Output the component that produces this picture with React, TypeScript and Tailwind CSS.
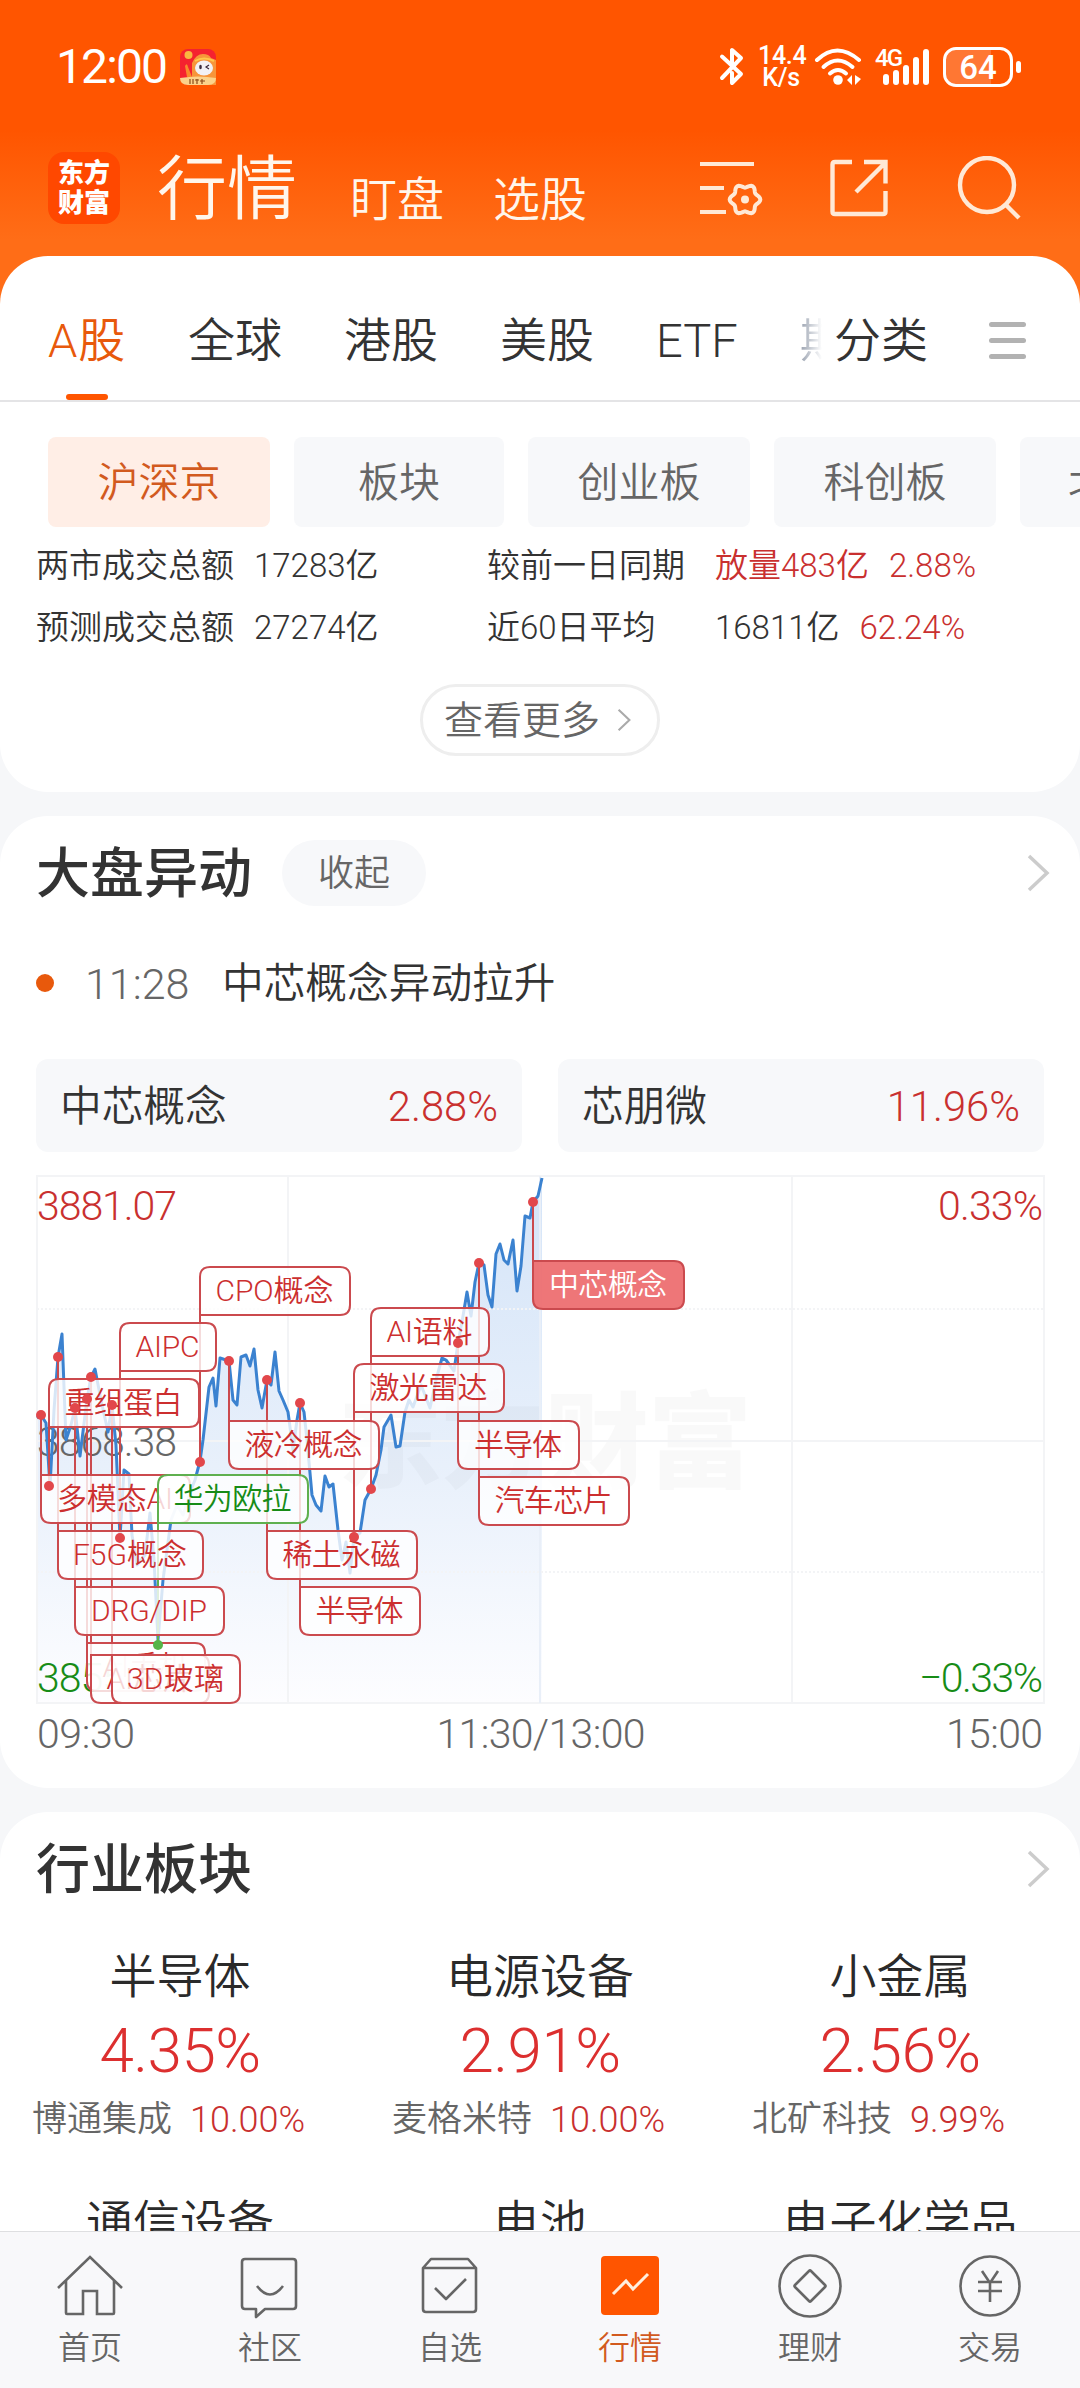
const tabs = ["A股", "全球", "港股", "美股", "ETF"]

const nodes: [number, number][] = [
  [37, 1418], [41, 1415], [46, 1423], [50, 1487], [54, 1410], [58, 1357], [62, 1334], [66, 1440],
  [71, 1425], [75, 1408], [80, 1456], [87, 1399], [91, 1377], [95, 1369], [101, 1400], [108, 1432],
  [112, 1405], [116, 1445], [120, 1538], [124, 1470], [129, 1474], [132, 1535], [137, 1565],
  [145, 1555], [150, 1513], [154, 1560], [158, 1640], [163, 1580], [171, 1520], [177, 1505],
  [183, 1515], [191, 1490], [195, 1480], [200, 1461], [203, 1440], [209, 1387], [213, 1378],
  [216, 1406], [220, 1358], [229, 1361], [233, 1400], [237, 1405], [241, 1357], [246, 1355],
  [250, 1366], [254, 1349], [258, 1390], [262, 1408], [267, 1380], [271, 1385], [275, 1352],
  [279, 1391], [283, 1400], [288, 1412], [293, 1450], [297, 1420], [300, 1403], [304, 1412],
  [307, 1440], [312, 1495], [316, 1505], [321, 1511], [325, 1476], [329, 1487], [333, 1484],
  [338, 1530], [342, 1560], [346, 1542], [350, 1573], [354, 1537], [360, 1533], [365, 1500],
  [371, 1489], [376, 1475], [381, 1450], [384, 1427], [391, 1415], [396, 1447], [400, 1446],
  [405, 1412], [409, 1400], [413, 1407], [421, 1385], [425, 1395], [430, 1408], [436, 1380],
  [442, 1358], [446, 1360], [454, 1371], [458, 1343], [463, 1316], [467, 1292], [471, 1316],
  [475, 1282], [479, 1263], [484, 1265], [488, 1295], [492, 1307], [496, 1254], [500, 1244],
  [504, 1260], [508, 1264], [513, 1240], [517, 1291], [521, 1266], [525, 1216], [530, 1218],
  [533, 1202], [538, 1196], [542, 1178],
]

type Flag = {
  text: string
  x: number
  y: number
  w: number
  dot: number
  textW: number
  kind?: "green" | "solid"
}

const flags: Flag[] = [
  { text: "CPO概念", x: 200, y: 1267, w: 150, dot: 1462, textW: 118 },
  { text: "AIPC", x: 120, y: 1323, w: 96, dot: 1538, textW: 64 },
  { text: "重组蛋白", x: 49, y: 1379, w: 150, dot: 1486, textW: 118 },
  { text: "多模态AI", x: 41, y: 1475, w: 149, dot: 1415, textW: 116 },
  { text: "华为欧拉", x: 158, y: 1475, w: 150, dot: 1645, textW: 118, kind: "green" },
  { text: "F5G概念", x: 58, y: 1531, w: 145, dot: 1357, textW: 114 },
  { text: "DRG/DIP", x: 75, y: 1587, w: 149, dot: 1408, textW: 116 },
  { text: "AI手机", x: 87, y: 1643, w: 118, dot: 1399, textW: 86 },
  { text: "AI芯片", x: 91, y: 1655, w: 118, dot: 1377, textW: 86 },
  { text: "3D玻璃", x: 112, y: 1655, w: 128, dot: 1405, textW: 97 },
  { text: "稀土永磁", x: 267, y: 1531, w: 150, dot: 1380, textW: 118 },
  { text: "半导体", x: 300, y: 1587, w: 120, dot: 1403, textW: 88 },
  { text: "AI语料", x: 371, y: 1308, w: 118, dot: 1489, textW: 86 },
  { text: "激光雷达", x: 354, y: 1364, w: 150, dot: 1537, textW: 118 },
  { text: "液冷概念", x: 229, y: 1421, w: 150, dot: 1361, textW: 118 },
  { text: "半导体", x: 458, y: 1421, w: 121, dot: 1343, textW: 88 },
  { text: "汽车芯片", x: 479, y: 1477, w: 150, dot: 1263, textW: 118 },
  { text: "中芯概念", x: 533, y: 1261, w: 151, dot: 1202, textW: 118, kind: "solid" },
]

// rounded box whose corner at the pole side stays square
function flagPath(f: Flag) {
  const r = 10
  const h = 48
  const up = f.dot < f.y
  const tl = up ? 0 : r
  const bl = up ? r : 0
  return `M${f.x + tl} ${f.y}h${f.w - tl - r}q${r} 0 ${r} ${r}v${h - 2 * r}q0 ${r} ${-r} ${r}h${-(f.w - bl - r)}q${-bl} 0 ${-bl} ${-bl}v${-(h - bl - tl)}q0 ${-tl} ${tl} ${-tl}Z`
}

function flagColor(f: Flag) {
  return f.kind === "green" ? "#5fb04f" : "#cb4a4e"
}

// six-lobed gear outline
const gear = Array.from({ length: 72 }, (_, i) => {
  const a = (i * Math.PI) / 36
  const r = 13.6 + 1.7 * Math.cos(6 * a)
  return `${(45 + r * Math.cos(a)).toFixed(2)} ${(43.5 + r * Math.sin(a)).toFixed(2)}`
}).join("L")

function StatusBar() {
  return (
    <div className="flex h-[134px] items-center justify-between pl-[56px] pr-[59px] font-normal text-white">
      <div className="flex items-center gap-[14px]">
        <span className="text-[48px] leading-[48px] tracking-[-1.9px]">12:00</span>
        <svg viewBox="0 0 36 36" className="h-9 w-9">
          <rect width="36" height="36" rx="8" fill="#f5222f" />
          <path d="M12 36V14q4-9 11-9 6 0 8 4l5 2v25Z" fill="#f7953a" />
          <path d="M5 17q2-4 3 1l4 10H7Z" fill="#f98a2c" />
          <circle cx="8.500" cy="6" r="4" fill="#f9b640" />
          <path d="M15 12q9-5 19 0" stroke="#ffc64a" strokeWidth="2" fill="none" />
          <ellipse cx="24" cy="19" rx="9" ry="7.500" fill="#f2f1f5" />
          <ellipse cx="20.500" cy="18" rx="1.300" ry="2.200" fill="#3a2b3d" />
          <path d="m29 16-3 2 3 2" stroke="#3a2b3d" strokeWidth="1.200" fill="none" />
          <path d="M0 29q18-3 36 0v0q0 7-8 7H8q-8 0-8-7Z" fill="#fbd28b" />
          <path d="M10 30v5m3-5v5m4-5v5m-2-4h4m3-1v5m-2-3h5" stroke="#8a4a1a" strokeWidth="1.200" />
        </svg>
      </div>
      <div className="flex items-center">
        <svg viewBox="0 0 26 40" className="h-10 w-[26px]" fill="none" stroke="currentColor" strokeWidth="4" strokeLinecap="round" strokeLinejoin="round">
          <path d="M3 9.500 22 27l-9 9V26M3 31 22 11 13 3v12" />
        </svg>
        <div className="ml-[13px] w-[46px] text-center text-[25px] font-medium leading-[22px] tracking-[-0.3px]">
          <div>14.4</div>
          <div>K/s</div>
        </div>
        <svg viewBox="0 0 48 38" className="ml-[10px] h-[38px] w-12" fill="none" stroke="currentColor" strokeWidth="4" strokeLinecap="round">
          <path d="M3 12q20-19 42 0" />
          <path d="M9.500 19q14-13 29 0" />
          <path d="M16 25.500q8-7 16 0" />
          <circle cx="24" cy="32" r="4.800" fill="currentColor" stroke="none" />
          <path d="M38 27v10l-5-5ZM41 27v10l6-6Z" fill="currentColor" stroke="none" />
        </svg>
        <div className="relative ml-[13px] h-[38px] w-[56px]">
          <span className="absolute left-0 top-0 text-[24px] font-medium leading-[20px] tracking-[-2px]">4G</span>
          <svg viewBox="0 0 56 38" className="h-full w-full" fill="currentColor">
            <rect x="8" y="26" width="6" height="11" rx="3" />
            <rect x="18" y="22" width="6" height="15" rx="3" />
            <rect x="28" y="17" width="6" height="20" rx="3" />
            <rect x="38" y="9" width="6" height="28" rx="3" />
            <rect x="48" y="1" width="6" height="36" rx="3" />
          </svg>
        </div>
        <div className="relative ml-[12px] flex h-10 w-[70px] items-center justify-center overflow-hidden rounded-[13px] border-[3px] border-white">
          <div className="absolute inset-y-0 left-0 w-[45px] bg-white/20" />
          <span className="relative text-[33px] font-medium leading-none">64</span>
        </div>
        <div className="ml-[3px] h-3 w-[5px] rounded-full bg-white" />
      </div>
    </div>
  )
}

function TitleBar() {
  return (
    <div className="flex h-[122px] items-start px-12 text-[#fff6ec]">
      <div className="mt-[18px] flex h-[72px] w-[72px] flex-col items-center justify-center rounded-[16px] bg-[#ff4800] text-[26px] font-black leading-[30px] text-white">
        <div>东方</div>
        <div>财富</div>
      </div>
      <div className="ml-[37px] mt-[21px] text-[70px] leading-[70px]">行情</div>
      <div className="ml-[53px] mt-[42px] text-[47px] leading-[47px]">盯盘</div>
      <div className="ml-[49px] mt-[42px] text-[47px] leading-[47px]">选股</div>
      <div className="ml-auto flex items-start text-[#ffe9d6]">
        <svg viewBox="0 0 64 64" className="mt-[22px] h-16 w-16" fill="none" stroke="currentColor" strokeWidth="4">
          <path d="M0 8h54M0 32h24M0 56h26" />
          <path d={`M${gear}Z`} />
          <circle cx="45" cy="43.500" r="4" fill="currentColor" stroke="none" />
        </svg>
        <svg viewBox="0 0 60 60" className="ml-[65px] mt-6 h-[60px] w-[60px]" fill="none" stroke="currentColor" strokeWidth="4.400">
          <path d="M23 4H6q-2.500 0-2.500 2.500v47q0 2.500 2.500 2.500h48q2.500 0 2.500-2.500V33M35 4h21.500v21.500M56 5 27 34" />
        </svg>
        <svg viewBox="0 0 64 64" className="ml-[68px] mr-[11px] mt-[22px] h-16 w-16" fill="none" stroke="currentColor" strokeWidth="4.400">
          <circle cx="30" cy="29" r="27" />
          <path d="m48 48 14 14" />
        </svg>
      </div>
    </div>
  )
}

function Chevron({ className = "h-10 w-6" }) {
  return (
    <svg viewBox="0 0 24 40" className={className} fill="none" stroke="currentColor" strokeWidth="3.500">
      <path d="m3 3 18 17L3 37" />
    </svg>
  )
}

function MarketChart() {
  const line = nodes.map((p) => p.join(" ")).join("L")
  return (
    <svg viewBox="0 1164 1080 624" className="h-[624px] w-full">
      <defs>
        <linearGradient id="area" x1="0" y1="1176" x2="0" y2="1703" gradientUnits="userSpaceOnUse">
          <stop offset="0" stopColor="#d4e4f8" />
          <stop offset="0.550" stopColor="#e8f0fb" />
          <stop offset="1" stopColor="#fdfdff" />
        </linearGradient>
      </defs>
      <path d={`M37 1703L${line}V1703Z`} fill="url(#area)" />
      <text x="338" y="1480" fontSize="104" fontWeight="900" fill="#000" fillOpacity="0.025" textLength="414">东方财富</text>
      <g stroke="#f3f4f6" strokeWidth="2" fill="none">
        <path d="M37 1176H1044V1703H37ZM288 1176V1703M792 1176V1703M37 1441H1044" />
        <path d="M540 1176V1703" stroke="#e9eff8" />
        <path d="M37 1309H1044M37 1572H1044" strokeDasharray="2 2" />
      </g>

      <g fontSize="41">
        <text x="37" y="1220" fill="#c9302f" textLength="140">3881.07</text>
        <text x="1043" y="1220" fill="#c9302f" textAnchor="end" textLength="105">0.33%</text>
        <text x="37" y="1456" fill="#666" textLength="140">3868.38</text>
        <text x="37" y="1692" fill="#178c17" textLength="140">3855.69</text>
        <text x="1043" y="1692" fill="#178c17" textAnchor="end" textLength="124">−0.33%</text>
        <g fill="#666">
          <text x="37" y="1748" textLength="98">09:30</text>
          <text x="541" y="1748" textAnchor="middle" textLength="209">11:30/13:00</text>
          <text x="1043" y="1748" textAnchor="end" textLength="97">15:00</text>
        </g>
      </g>

      <path d={`M${line}`} fill="none" stroke="#3b82d0" strokeWidth="3" strokeLinejoin="round" />

      {flags.map((f, i) => (
        <path key={i} d={`M${f.x} ${f.dot}V${f.y + 24}`} stroke={flagColor(f)} strokeWidth="2" />
      ))}
      {flags.map((f, i) => (
        <g key={i}>
          <path
            d={flagPath(f)}
            fill={f.kind === "solid" ? "#ed6f71" : "#fff"}
            fillOpacity={f.kind === "solid" ? 0.95 : 0.8}
            stroke={flagColor(f)}
            strokeWidth="2"
          />
          <text
            x={f.x + f.w / 2 - 0.5}
            y={f.y + 34}
            fontSize="30"
            textAnchor="middle"
            textLength={f.textW}
            fill={f.kind === "solid" ? "#fff" : f.kind === "green" ? "#178c17" : "#cc2f2f"}
          >
            {f.text}
          </text>
        </g>
      ))}
      {flags.map((f, i) => (
        <circle key={i} cx={f.x} cy={f.dot} r="5" fill={f.kind === "green" ? "#55b548" : "#e2474b"} />
      ))}
    </svg>
  )
}

const sectors = [
  { name: "半导体", pct: "4.35%", stock: "博通集成", change: "10.00%" },
  { name: "电源设备", pct: "2.91%", stock: "麦格米特", change: "10.00%" },
  { name: "小金属", pct: "2.56%", stock: "北矿科技", change: "9.99%" },
]

function BottomNav() {
  const item = "flex w-[180px] flex-col items-center pt-[19px]"
  const label = "mt-[11px] text-[32px] leading-[36px]"
  const icon = "h-[68px] w-[68px]"
  return (
    <nav className="flex h-[157px] border-t border-[#dedfe1] bg-[#f8f8fa] text-[#666]">
      <div className={item}>
        <svg viewBox="0 0 68 68" className={icon} fill="none" stroke="currentColor" strokeWidth="2.600">
          <path d="M2 37 34 6l32 31M10 30v32q0 1 1 1h16V40h14v23h16q1 0 1-1V30" />
        </svg>
        <span className={label}>首页</span>
      </div>
      <div className={item}>
        <svg viewBox="0 0 68 68" className={icon} fill="none" stroke="currentColor" strokeWidth="2.600">
          <path d="M9 8h48q3 0 3 3v44q0 3-3 3H29l-9 8v-8H9q-3 0-3-3V11q0-3 3-3Z" strokeLinejoin="round" />
          <path d="M21 35q13 17 26 0" />
        </svg>
        <span className={label}>社区</span>
      </div>
      <div className={item}>
        <svg viewBox="0 0 68 68" className={icon} fill="none" stroke="currentColor" strokeWidth="2.600">
          <path d="M7 17v41q0 3 3 3h47q3 0 3-3V17ZM7 17l8-9h37l8 9M19 37l11 11 20-20" strokeLinejoin="round" />
        </svg>
        <span className={label}>自选</span>
      </div>
      <div className={item}>
        <svg viewBox="0 0 68 68" className={icon} fill="none">
          <rect x="5" y="5" width="58" height="59" rx="4" fill="#ff5500" />
          <path d="m17 43 13-13 7 8 15-15" stroke="#ffeedd" strokeWidth="3" />
        </svg>
        <span className="mt-[11px] text-[32px] leading-[36px] text-[#d25a1e]">行情</span>
      </div>
      <div className={item}>
        <svg viewBox="0 0 68 68" className={icon} fill="none" stroke="currentColor" strokeWidth="2.600">
          <circle cx="34" cy="35" r="30.500" />
          <path d="M33 20q1-1 2 0l14 14q1 1 0 2L35 50q-1 1-2 0L19 36q-1-1 0-2Z" />
        </svg>
        <span className={label}>理财</span>
      </div>
      <div className={item}>
        <svg viewBox="0 0 68 68" className={icon} fill="none" stroke="currentColor" strokeWidth="2.600">
          <circle cx="34" cy="35" r="29.500" />
          <path d="m26 20 8 12 8-12M22 31h24M22 40h24M34 31v20" />
        </svg>
        <span className={label}>交易</span>
      </div>
    </nav>
  )
}

export default function App() {
  return (
    <div className="flex h-[2388px] w-[1080px] flex-col overflow-hidden bg-[#f6f7f9] font-['Roboto','Noto_Sans_CJK_SC',sans-serif] font-[350] text-[#333]">
      <div className="bg-[linear-gradient(#ff5500_0px,#ff5500_130px,#ff6d17_240px,#ff6d17_310px,#f6f7f9_310px)]">
        <header>
          <StatusBar />
          <TitleBar />
        </header>

        <section className="h-[536px] rounded-[48px] bg-white">
          <div className="flex h-[146px] items-start border-b-2 border-[#e4e4e6] text-[47px] leading-[47px]">
            <div className="flex h-full flex-1 gap-[62px] overflow-hidden pl-12 pt-[61px]">
              {tabs.map((t, i) =>
                i === 0 ? (
                  <div key={t} className="relative shrink-0 tracking-[0.8px] text-[#e8590c]">
                    {t}
                    <div className="absolute left-1/2 top-[77px] h-[6px] w-[42px] -translate-x-1/2 rounded-sm bg-[#ff5500]" />
                  </div>
                ) : (
                  <div key={t} className="shrink-0">{t}</div>
                )
              )}
              <div className="w-[22px] shrink-0 overflow-hidden bg-gradient-to-r from-gray-400 to-white bg-clip-text text-transparent">期</div>
            </div>
            <div className="w-[94px] shrink-0 pt-[61px]">分类</div>
            <div className="ml-[61px] mr-[54px] mt-[66px] flex flex-col gap-[11px]">
              <div className="h-[5px] w-[37px] rounded-sm bg-[#b2b2b2]" />
              <div className="h-[5px] w-[37px] rounded-sm bg-[#b2b2b2]" />
              <div className="h-[5px] w-[37px] rounded-sm bg-[#b2b2b2]" />
            </div>
          </div>

          <div className="flex gap-6 overflow-hidden pl-12 pt-[35px] text-[41px] leading-[92px] text-[#666]">
            <div className="h-[90px] w-[222px] shrink-0 rounded-lg bg-[#ffeee6] text-center text-[#d25a1e]">沪深京</div>
            <div className="h-[90px] w-[210px] shrink-0 rounded-lg bg-[#f7f8fa] text-center">板块</div>
            <div className="h-[90px] w-[222px] shrink-0 rounded-lg bg-[#f7f8fa] text-center">创业板</div>
            <div className="h-[90px] w-[222px] shrink-0 rounded-lg bg-[#f7f8fa] text-center">科创板</div>
            <div className="h-[90px] shrink-0 rounded-lg bg-[#f7f8fa] pl-12">北证</div>
          </div>

          <div className="grid grid-cols-[218px_233px_228px_1fr] pl-9 pt-2 text-[33px] leading-[62px]">
            <span>两市成交总额</span>
            <span>17283亿</span>
            <span>较前一日同期</span>
            <span className="text-[#c9302f]">放量483亿<span className="ml-5">2.88%</span></span>
            <span>预测成交总额</span>
            <span>27274亿</span>
            <span>近60日平均</span>
            <span>16811亿<span className="ml-5 text-[#c9302f]">62.24%</span></span>
          </div>

          <div className="mx-auto mt-[25px] flex h-[72px] w-[240px] items-center rounded-full border-[3px] border-[#eeeeee] pl-[21px] text-[39px] text-[#666]">
            <span className="pt-[2px] leading-none">查看更多</span>
            <Chevron className="ml-[16px] h-6 w-4 text-[#aaa]" />
          </div>
        </section>
      </div>

      <section className="mt-6 h-[972px] shrink-0 rounded-[48px] bg-white">
        <div className="flex h-[114px] items-center pl-9 pr-[30px]">
          <h2 className="pt-[3px] text-[54px] font-medium leading-none">大盘异动</h2>
          <span className="ml-[30px] h-[66px] w-[144px] rounded-full bg-[#f7f8fa] text-center text-[36px] leading-[68px] text-[#666]">收起</span>
          <Chevron className="ml-auto h-10 w-6 text-[#ccc]" />
        </div>
        <div className="flex h-[106px] items-center pl-9 text-[41.7px] leading-none">
          <span className="h-[18px] w-[18px] rounded-full bg-[#e8590c]" />
          <span className="ml-[31px] w-[137px] pt-[2px] text-[43px] text-[#666]">11:28</span>
          <span className="pt-[2px]">中芯概念异动拉升</span>
        </div>
        <div className="mt-[23px] flex gap-9 px-9 text-[41.7px] leading-[95px]">
          <div className="flex h-[93px] flex-1 justify-between rounded-xl bg-[#f7f8fa] px-6">
            <span>中芯概念</span>
            <span className="text-[#c9302f]">2.88%</span>
          </div>
          <div className="flex h-[93px] flex-1 justify-between rounded-xl bg-[#f7f8fa] px-6">
            <span>芯朋微</span>
            <span className="text-[#c9302f]">11.96%</span>
          </div>
        </div>
        <div className="mt-3">
          <MarketChart />
        </div>
      </section>

      <section className="mt-6 h-[419px] shrink-0 overflow-hidden rounded-t-[48px] bg-white">
        <div className="flex h-[114px] items-center pl-9 pr-[30px]">
          <h2 className="pt-[3px] text-[54px] font-medium leading-none">行业板块</h2>
          <Chevron className="ml-auto h-10 w-6 text-[#ccc]" />
        </div>
        <div className="grid grid-cols-3 pt-[21px]">
          {sectors.map((s) => (
            <div key={s.name} className="h-[246px]">
              <div className="text-center text-[47px] leading-[60px] text-[#2a2a2a]">{s.name}</div>
              <div className="mt-[13px] text-center text-[62px] leading-[62px] tracking-[-0.6px] text-[#dc2f2f]">{s.pct}</div>
              <div className="mt-[18px] flex pl-8 text-[35px] leading-[40px]">
                <span className="text-[#666]">{s.stock}</span>
                <span className="ml-[18px] text-[36px] text-[#c9302f]">{s.change}</span>
              </div>
            </div>
          ))}
          {["通信设备", "电池", "电子化学品"].map((n) => (
            <div key={n} className="text-center text-[47px] leading-[60px] text-[#2a2a2a]">{n}</div>
          ))}
        </div>
      </section>

      <BottomNav />
    </div>
  )
}
